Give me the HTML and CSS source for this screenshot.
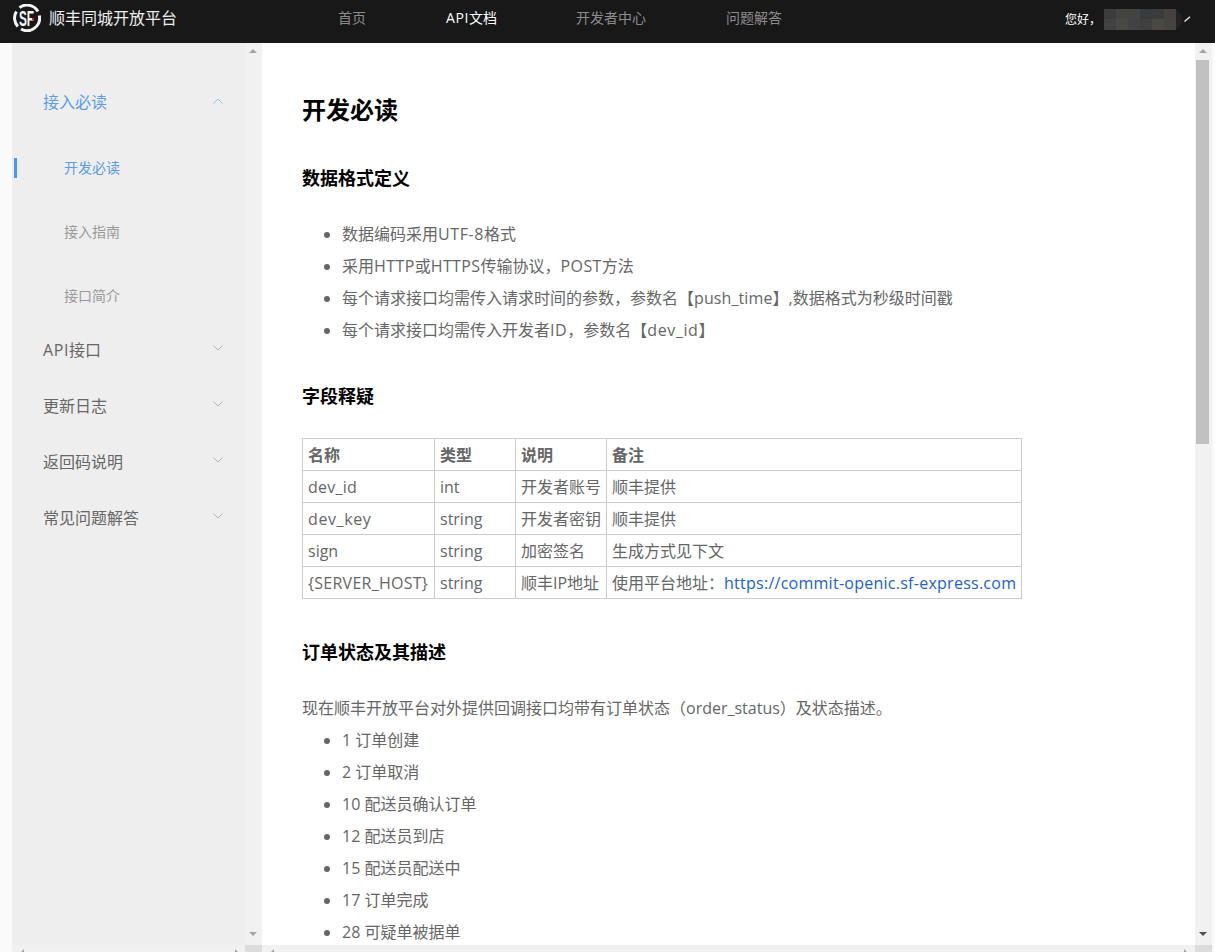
FILE: index.html
```html
<!DOCTYPE html>
<html lang="zh-CN">
<head>
<meta charset="utf-8">
<title>顺丰同城开放平台</title>
<link rel="stylesheet" href="styles.css">
</head>
<body>
<header class="topbar">
  <div class="brand">
    <svg class="logo" viewBox="0 0 28 28" width="28" height="28">
      <path d="M6.5 3.6A12.5 12.5 0 0 1 24.9 7.5M26.3 11.5A12.5 12.5 0 0 1 8 25M4.8 22.5A12.5 12.5 0 0 1 3.4 7.5" fill="none" stroke="#f4f4f4" stroke-width="3"/>
      <text x="11" y="21.6" class="logo-text" transform="scale(0.54 1)">SF</text>
      <rect x="19" y="14" width="2" height="2" fill="#e01020"/>
    </svg>
    <span class="brand-name">顺丰同城开放平台</span>
  </div>
  <nav class="nav">
    <a class="nav-item">首页</a>
    <a class="nav-item nav-api active"><span class="en-wide">API</span>文档</a>
    <a class="nav-item">开发者中心</a>
    <a class="nav-item">问题解答</a>
  </nav>
  <div class="user">
    <span class="hello">您好，</span>
    <div class="mosaic">
      <i class="m1"></i><i class="m2"></i><i class="m3"></i><i class="m4"></i><i class="m5"></i><i class="m6"></i>
      <i class="m7"></i><i class="m8"></i><i class="m9"></i><i class="m10"></i><i class="m11"></i><i class="m12"></i>
    </div>
    <svg class="caret" viewBox="0 0 7 6" width="7" height="6"><path d="M0.5 5.5L6 0.8" fill="none" stroke="#dfe8ec" stroke-width="1.4"/></svg>
  </div>
</header>

<div class="layout">
  <div class="edge"></div>
  <aside class="sidebar">
    <div class="menu">
      <div class="menu-head open first">
        <span>接入必读</span>
        <svg class="chev" viewBox="0 0 10 6" width="10" height="6"><path d="M0.5 5.5L5 1L9.5 5.5" fill="none" stroke="currentColor"/></svg>
      </div>
      <div class="sub active">开发必读</div>
      <div class="sub">接入指南</div>
      <div class="sub last">接口简介</div>
      <div class="menu-head">
        <span><span class="en-wide">API</span>接口</span>
        <svg class="chev" viewBox="0 0 10 6" width="10" height="6"><path d="M0.5 0.5L5 5L9.5 0.5" fill="none" stroke="currentColor"/></svg>
      </div>
      <div class="menu-head">
        <span>更新日志</span>
        <svg class="chev" viewBox="0 0 10 6" width="10" height="6"><path d="M0.5 0.5L5 5L9.5 0.5" fill="none" stroke="currentColor"/></svg>
      </div>
      <div class="menu-head">
        <span>返回码说明</span>
        <svg class="chev" viewBox="0 0 10 6" width="10" height="6"><path d="M0.5 0.5L5 5L9.5 0.5" fill="none" stroke="currentColor"/></svg>
      </div>
      <div class="menu-head">
        <span>常见问题解答</span>
        <svg class="chev" viewBox="0 0 10 6" width="10" height="6"><path d="M0.5 0.5L5 5L9.5 0.5" fill="none" stroke="currentColor"/></svg>
      </div>
    </div>
  </aside>
  <div class="vbar light">
    <span class="arrow up"></span>
    <span class="arrow down"></span>
  </div>

  <main class="content">
    <h1>开发必读</h1>
    <h2 class="h-format">数据格式定义</h2>
    <ul class="list-format">
      <li>数据编码采用<span class="en-wide">UTF-8</span>格式</li>
      <li>采用<span class="en">HTTP</span>或<span class="en">HTTPS</span>传输协议，<span class="en">POST</span>方法</li>
      <li>每个请求接口均需传入请求时间的参数，参数名【<span class="en-slim">push_time</span>】,数据格式为秒级时间戳</li>
      <li>每个请求接口均需传入开发者<span class="en-wide">ID</span>，参数名【<span class="en-wide">dev_id</span>】</li>
    </ul>
    <h2 class="h-field">字段释疑</h2>
    <table>
      <colgroup><col class="c1"><col class="c2"><col class="c3"><col class="c4"></colgroup>
      <tr><th>名称</th><th>类型</th><th>说明</th><th>备注</th></tr>
      <tr><td><span class="en-thin">dev_id</span></td><td>int</td><td>开发者账号</td><td>顺丰提供</td></tr>
      <tr><td><span class="en-wide">dev_key</span></td><td>string</td><td>开发者密钥</td><td>顺丰提供</td></tr>
      <tr><td>sign</td><td>string</td><td>加密签名</td><td>生成方式见下文</td></tr>
      <tr><td><span class="en-thin">{SERVER_HOST}</span></td><td>string</td><td>顺丰IP地址</td><td>使用平台地址：<a class="link en-thin">https://commit-openic.sf-express.com</a></td></tr>
    </table>
    <h2 class="h-status">订单状态及其描述</h2>
    <p>现在顺丰开放平台对外提供回调接口均带有订单状态（order_status）及状态描述。</p>
    <ul class="list-status">
      <li>1 订单创建</li>
      <li>2 订单取消</li>
      <li>10 配送员确认订单</li>
      <li>12 配送员到店</li>
      <li>15 配送员配送中</li>
      <li>17 订单完成</li>
      <li>28 可疑单被据单</li>
    </ul>
  </main>
  <div class="vbar">
    <span class="arrow up"></span>
    <span class="thumb"></span>
    <span class="arrow down dark"></span>
  </div>
  <div class="edge narrow"></div>
</div>
<div class="hbars">
  <div class="edge"></div>
  <div class="hbar side"><span class="tri left"></span><span class="tri right"></span></div>
  <div class="corner"></div>
  <div class="hbar main"><span class="tri left"></span><span class="tri right"></span></div>
  <div class="corner"></div>
  <div class="edge narrow"></div>
</div>
</body>
</html>
```
FILE: styles.css
```css
* { box-sizing: border-box; }
html, body { margin: 0; height: 100%; overflow: hidden; }
body {
  width: 1215px;
  height: 952px;
  display: flex;
  flex-direction: column;
  font-family: "Open Sans", "Noto Sans CJK SC", sans-serif;
  background: #fff;
}
.en-wide { letter-spacing: 0.6px; }
.en { letter-spacing: 0.4px; }
.en-thin { letter-spacing: 0.26px; }
.en-slim { letter-spacing: 0.1px; }
.topbar {
  height: 43px;
  flex: none;
  background: #181818;
  display: flex;
  align-items: center;
  color: #fff;
}
.brand { width: 338px; padding: 0 0 7px 13px; display: flex; align-items: center; gap: 8px; flex: none; }
.logo { display: block; flex: none; }
.logo-text { font: 700 22px "Liberation Sans", sans-serif; fill: #f4f4f4; }
.brand-name { font-size: 16px; color: #eee; line-height: 22px; }
.nav { display: flex; flex: 1; font-size: 14px; line-height: 36px; margin-top: -7px; }
.nav-item { color: #8c8c8c; margin-right: 80px; white-space: nowrap; }
.nav-api { margin-right: 79px; }
.nav-item.active { color: #fff; }
.user { display: flex; align-items: center; flex: none; padding: 0 24px 4px 0; font-size: 12px; color: #fff; }
.hello { width: 39px; white-space: nowrap; padding-bottom: 2px; }
.mosaic {
  width: 78px;
  height: 21px;
  padding-right: 6px;
  display: grid;
  grid-template-columns: repeat(6, 12px);
  grid-template-rows: 10px 11px;
  background: #222;
  border-radius: 0 10px 10px 0;
}
.mosaic i { display: block; }
.m1 { background: #3c3c3c; } .m2 { background: #454440; } .m3 { background: #434343; }
.m4 { background: #393a3c; } .m5 { background: #3a3b3b; } .m6 { background: #45423e; }
.m7 { background: #414141; } .m8 { background: #4a4845; } .m9 { background: #424242; }
.m10 { background: #3f3f3f; } .m11 { background: #4a4845; } .m12 { background: #46443f; }
.caret { display: block; margin-left: 2px; margin-top: -2px; }

.layout { flex: 1; min-height: 0; display: flex; }
.edge { width: 12px; flex: none; background: #fafafa; }
.edge.narrow { width: 3px; }
.sidebar { width: 233px; flex: none; background: #eee; overflow: hidden; }
.menu { padding-top: 30px; }
.menu-head {
  height: 56px;
  padding: 0 22px 0 31px;
  display: flex;
  align-items: center;
  justify-content: space-between;
  font-size: 16px;
  color: #666;
}
.menu-head .chev { color: #b0b4b8; margin-top: -3px; }
.menu-head.open { color: #5b9bea; }
.menu-head.open .chev { color: #93bbec; margin-top: -1px; }
.first { margin-bottom: 7px; }
.sub {
  height: 64px;
  line-height: 64px;
  padding-left: 52px;
  font-size: 14px;
  color: #999;
  position: relative;
}
.sub.last { height: 57px; }
.sub.active { color: #5b9bea; }
.sub.active::before {
  content: "";
  position: absolute;
  left: 2px;
  top: 22px;
  width: 3px;
  height: 20px;
  background: #4e94f0;
}
.vbar {
  width: 17px;
  flex: none;
  background: #f1f1f1;
  position: relative;
  display: flex;
  flex-direction: column;
  align-items: flex-start;
  padding-left: 1px;
}
.arrow { position: absolute; left: 4px; width: 0; height: 0; border-left: 4px solid transparent; border-right: 4px solid transparent; }
.arrow.up { top: 6px; border-bottom: 4px solid #a3a3a3; }
.arrow.down { bottom: 9px; border-top: 4px solid #a3a3a3; }
.arrow.down.dark { border-top-color: #505050; }
.thumb { width: 13px; height: 384px; margin-top: 17px; background: #c1c1c1; }
.content {
  flex: 1;
  min-width: 0;
  overflow: hidden;
  padding: 0 40px;
  color: #666;
  font-size: 16px;
  line-height: 32px;
}
h1 { margin: 48px 0 0; font-size: 24px; line-height: 38px; font-weight: 700; color: #000; }
h2 { margin: 0; font-size: 18px; line-height: 28px; font-weight: 700; color: #000; }
.h-format { margin-top: 35px; }
.list-format { margin-top: 26px; }
ul { margin: 0; padding: 0 0 0 40px; }
.h-field { margin-top: 36px; }
table {
  margin-top: 28px;
  border-collapse: collapse;
  table-layout: fixed;
  width: 719px;
}
.c1 { width: 132px; } .c2 { width: 81px; } .c3 { width: 91px; } .c4 { width: 415px; }
th, td {
  border: 1px solid #ccc;
  padding: 0 5px;
  height: 32px;
  line-height: 30px;
  text-align: left;
  white-space: nowrap;
  color: #666;
  font-weight: 400;
}
th { font-weight: 700; }
.link { color: #2060d0; }
.h-status { margin-top: 39px; }
p { margin: 26px 0 0; }
.hbars { height: 7px; flex: none; display: flex; }
.hbar { position: relative; background: #f1f1f1; overflow: hidden; }
.hbar.side { width: 233px; }
.hbar.main { flex: 1; }
.corner { width: 17px; flex: none; background: #dcdcdc; }
.tri { position: absolute; top: 4px; width: 0; height: 0; border-top: 4px solid transparent; border-bottom: 4px solid transparent; }
.tri.left { left: 8px; border-right: 4px solid #a3a3a3; }
.tri.right { right: 6px; border-left: 4px solid #a3a3a3; }
.main .tri.right { right: 7px; }
```
